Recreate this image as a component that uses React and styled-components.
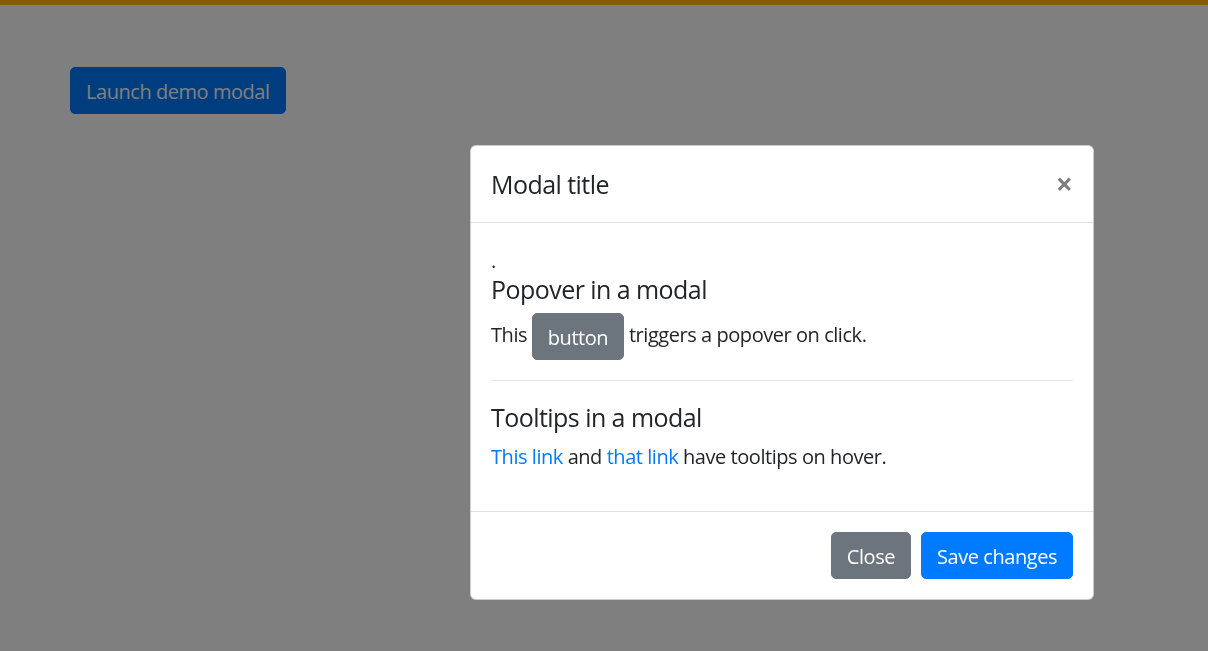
import React from 'react'
import styled, { createGlobalStyle } from 'styled-components'

const GlobalStyle = createGlobalStyle`
  * { box-sizing: border-box; }
  body {
    margin: 0;
    font-family: "Open Sans", "Liberation Sans", sans-serif;
    font-size: 20px;
    line-height: 1.5;
    letter-spacing: -0.45px;
    color: #212529;
    background: #fff;
  }
`

const TopBar = styled.div`
  height: 5px;
  background: #ffc107;
`

const Page = styled.div`
  padding: 62px 70px;
`

const Btn = styled.button`
  display: inline-block;
  font-family: inherit;
  font-size: 20px;
  line-height: 30px;
  letter-spacing: inherit;
  padding: ${p => (p.$lg ? '9px 15px 6px' : '8.5px 15px 6.5px')};
  border: 1px solid ${p => p.$bg};
  border-radius: 5px;
  background: ${p => p.$bg};
  color: #fff;
  vertical-align: middle;
  cursor: pointer;
`

const Backdrop = styled.div`
  position: fixed;
  inset: 0;
  background: rgba(0, 0, 0, 0.5);
  padding: 145px 0 0 470px;
`

const Dialog = styled.div`
  width: 624px;
  background: #fff;
  border: 1px solid rgba(0, 0, 0, 0.2);
  border-radius: 6px;
`

const Header = styled.div`
  display: flex;
  align-items: flex-start;
  justify-content: space-between;
  padding: 20px;
  border-bottom: 1px solid #dee2e6;
`

const Title = styled.h5`
  margin: 0;
  padding-top: 1px;
  font-size: 25px;
  font-weight: 400;
  line-height: 35px;
  letter-spacing: -0.55px;
`

const CloseX = styled.button`
  padding: 20px;
  margin: -17px -20px -20px auto;
  background: transparent;
  border: 0;
  font-family: inherit;
  font-size: 30px;
  font-weight: 700;
  line-height: 1;
  color: #000;
  opacity: 0.5;
  text-shadow: 0 1px 0 #fff;
`

const Body = styled.div`
  padding: 20px;
`

const Dot = styled.div`
  height: 30px;
  padding-top: 3px;
`

const Heading = styled.h5`
  margin: 0 0 10px;
  padding-top: 2px;
  font-size: 25px;
  font-weight: 400;
  line-height: 28px;
  letter-spacing: -0.55px;
`

const Text = styled.p`
  margin: 0 0 20px;
  padding-top: ${p => p.$shift || 0}px;
  line-height: ${p => 30 - (p.$shift || 0)}px;
`

const Link = styled.a`
  color: #007bff;
  text-decoration: none;
`

const Rule = styled.hr`
  margin: 20px 0;
  border: 0;
  border-top: 1px solid rgba(0, 0, 0, 0.1);
`

const Footer = styled.div`
  display: flex;
  justify-content: flex-end;
  gap: 10px;
  padding: 20px;
  border-top: 1px solid #dee2e6;
`

export default function App() {
  return (
    <>
      <GlobalStyle />
      <TopBar />
      <Page>
        <Btn $bg="#007bff" $lg>Launch demo modal</Btn>
      </Page>
      <Backdrop>
        <Dialog>
          <Header>
            <Title>Modal title</Title>
            <CloseX aria-label="Close">×</CloseX>
          </Header>
          <Body>
            <Dot>.</Dot>
            <Heading>Popover in a modal</Heading>
            <Text>
              This <Btn $bg="#6c757d">button</Btn> triggers a popover on click.
            </Text>
            <Rule />
            <Heading>Tooltips in a modal</Heading>
            <Text $shift={2}>
              <Link href="#">This link</Link> and <Link href="#">that link</Link> have tooltips on hover.
            </Text>
          </Body>
          <Footer>
            <Btn $bg="#6c757d">Close</Btn>
            <Btn $bg="#007bff">Save changes</Btn>
          </Footer>
        </Dialog>
      </Backdrop>
    </>
  )
}
